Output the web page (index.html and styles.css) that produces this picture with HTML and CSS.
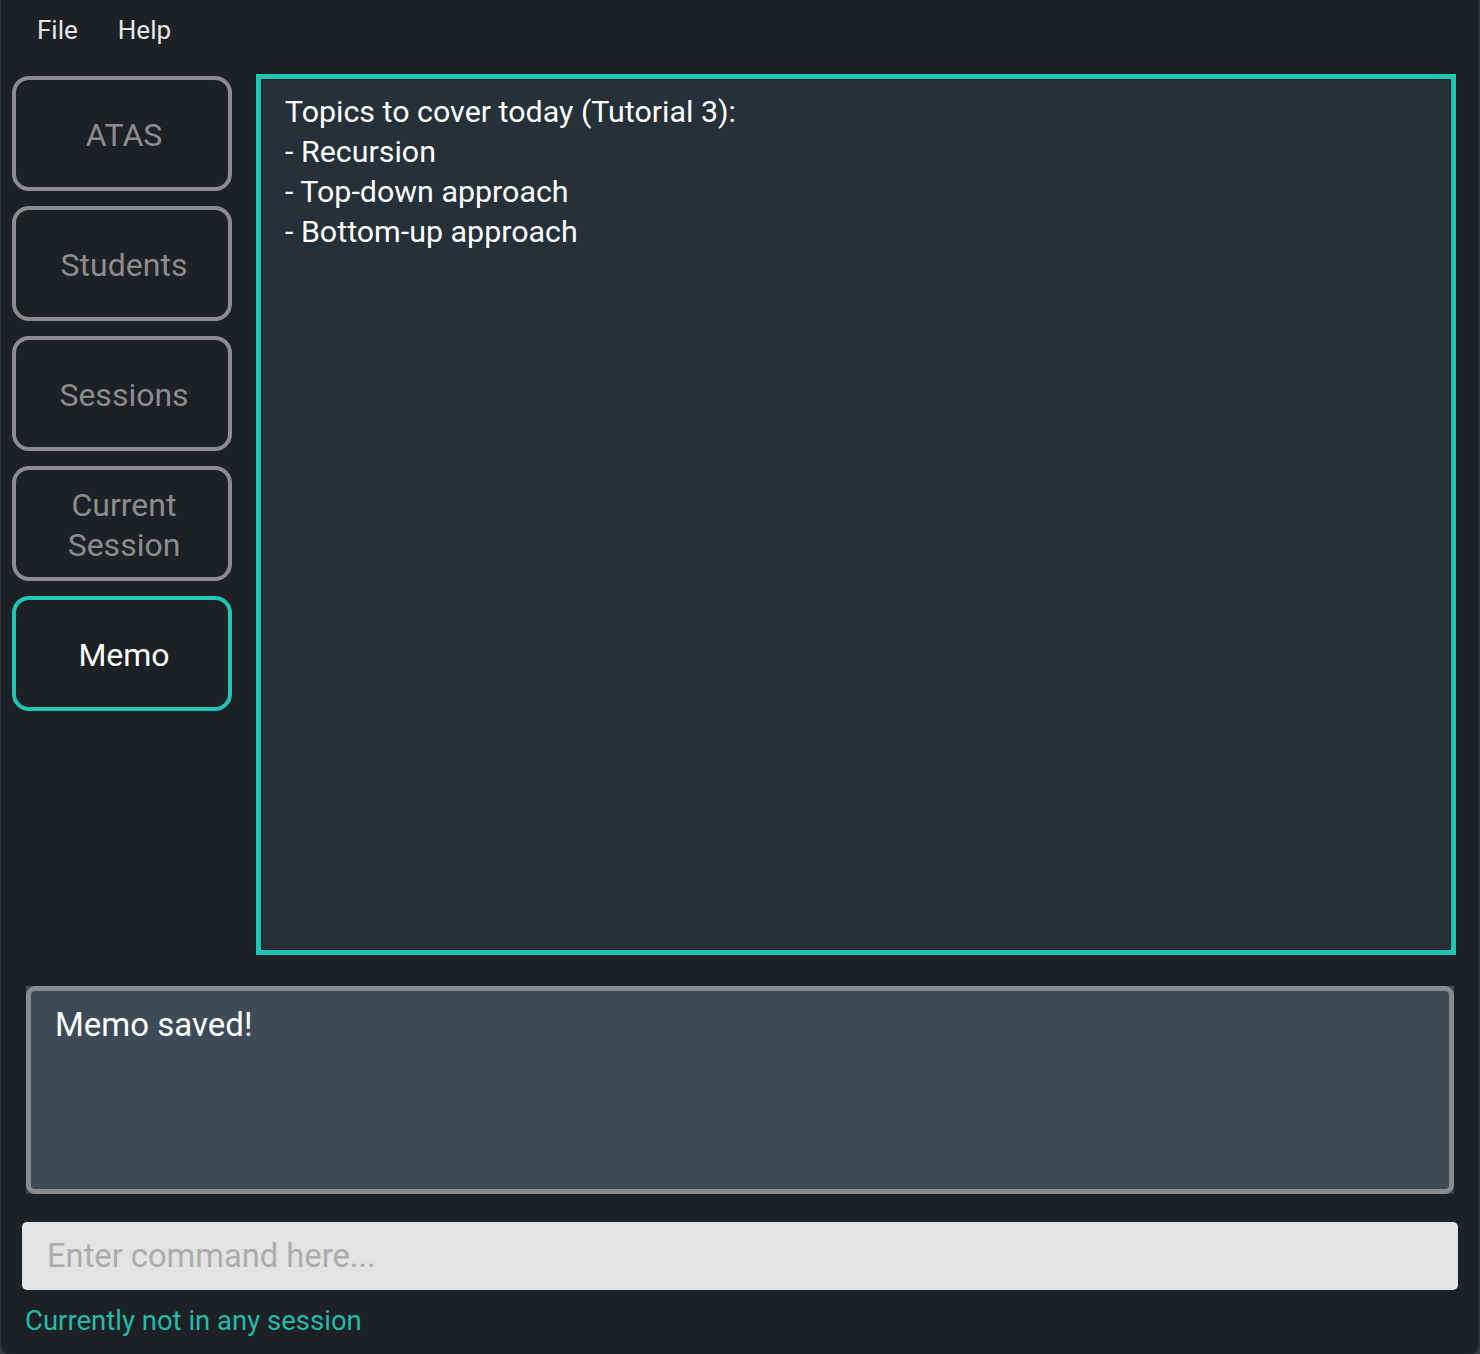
FILE: index.html
```html
<!DOCTYPE html>
<html>
<head>
<meta charset="utf-8">
<link rel="stylesheet" href="styles.css">
</head>
<body>
<div class="window">
  <div class="menubar">
    <span class="menu-item">File</span>
    <span class="menu-item">Help</span>
  </div>
  <div class="content">
    <nav class="sidebar">
      <div class="tab">ATAS</div>
      <div class="tab">Students</div>
      <div class="tab">Sessions</div>
      <div class="tab">Current<br>Session</div>
      <div class="tab active">Memo</div>
    </nav>
    <div class="memo-panel">
      <div class="memo-text">Topics to cover today (Tutorial 3):<br>- Recursion<br>- Top-down approach<br>- Bottom-up approach</div>
    </div>
  </div>
  <div class="result">
    <div class="result-inner">Memo saved!</div>
  </div>
  <div class="command">Enter command here...</div>
  <div class="status">Currently not in any session</div>
</div>
</body>
</html>
```

FILE: styles.css
```css
html, body {
  margin: 0;
  padding: 0;
  background: #3a3d42;
}
body {
  font-family: Roboto, "Noto Sans", sans-serif;
}
.window {
  box-sizing: border-box;
  width: 1480px;
  height: 1354px;
  background: #1d2025;
  border-left: 1px solid #2e3237;
  border-right: 2px solid #2e3237;
  border-radius: 0 0 9px 9px;
  overflow: hidden;
  display: flex;
  flex-direction: column;
}
.menubar {
  height: 60px;
  display: flex;
  align-items: center;
  padding-left: 36px;
  gap: 40px;
  box-sizing: border-box;
}
.menu-item {
  color: #e6e6e6;
  font-size: 26px;
  line-height: 30px;
}
.content {
  display: flex;
  padding-top: 14px;
}
.sidebar {
  width: 220px;
  margin-left: 11px;
  padding-top: 2px;
  display: flex;
  flex-direction: column;
  gap: 15px;
}
.tab {
  box-sizing: border-box;
  height: 115px;
  border: 4px solid #8c8c8c;
  border-radius: 17px;
  display: flex;
  align-items: center;
  justify-content: center;
  text-align: center;
  color: #8c8c8c;
  font-size: 32px;
  line-height: 40px;
  padding: 3px 0 0 4px;
}
.tab.active {
  border-color: #1fc6b6;
  color: #ffffff;
}
.memo-panel {
  box-sizing: border-box;
  margin-left: 24px;
  width: 1200px;
  height: 881px;
  border: 5px solid #1fc6b6;
  background: #263038;
  box-shadow: inset 0 0 0 1px #1d2025;
  padding: 13px 0 0 24px;
}
.memo-text {
  color: #ffffff;
  font-size: 30.4px;
  line-height: 40px;
}
.result {
  margin: 31px 0 0 25px;
  width: 1428px;
  height: 208px;
  background: #3d4a57;
}
.result-inner {
  box-sizing: border-box;
  height: 100%;
  border: 5px solid #8c8c8c;
  border-radius: 9px;
  padding: 12px 0 0 24px;
  color: #ffffff;
  font-size: 33px;
  line-height: 44px;
}
.command {
  box-sizing: border-box;
  margin: 28px 0 0 21px;
  width: 1436px;
  height: 68px;
  background: #e3e3e3;
  border-radius: 5px;
  padding-left: 25px;
  display: flex;
  align-items: center;
  color: #acacac;
  font-size: 32.7px;
}
.status {
  margin: 13px 0 0 24px;
  color: #22bcac;
  font-size: 27.5px;
  line-height: 36px;
}
```
